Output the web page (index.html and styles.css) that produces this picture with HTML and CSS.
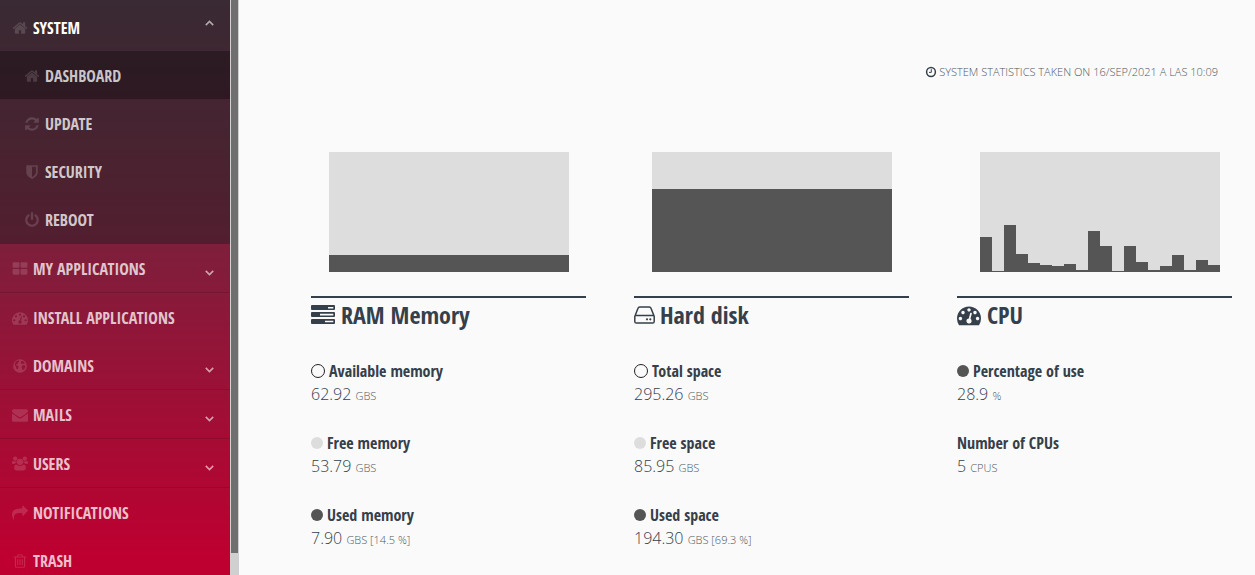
FILE: index.html
```html
<!DOCTYPE html>
<html lang="en">
<head>
  <meta charset="UTF-8" />
  <meta name="viewport" content="width=device-width, initial-scale=1.0"/>
  <title>Dashboard</title>
  <link rel="stylesheet" href="styles.css">
</head>
<body>

<svg class="sprite" aria-hidden="true">
  <symbol id="home" viewBox="0 0 1792 1792"><path d="M1472 992v480q0 26-19 45t-45 19h-384v-384h-256v384h-384q-26 0-45-19t-19-45v-480q0-1 .5-3t.5-3l575-474 575 474q1 2 1 6zm223-69l-62 74q-8 9-21 11h-3q-13 0-21-7l-692-577-692 577q-12 8-24 7-13-2-21-11l-62-74q-8-10-7-23.5t11-21.5l719-599q32-26 76-26t76 26l244 204v-195q0-14 9-23t23-9h192q14 0 23 9t9 23v408l219 182q10 8 11 21.5t-7 23.5z"/></symbol>
  <symbol id="refresh" viewBox="0 0 1792 1792"><path d="M1639 1056q0 5-1 7-64 268-268 434.5t-478 166.5q-146 0-282.5-55t-243.5-157l-129 129q-19 19-45 19t-45-19-19-45v-448q0-26 19-45t45-19h448q26 0 45 19t19 45-19 45l-137 137q71 66 161 102t187 36q134 0 250-65t186-179q11-17 53-117 8-23 30-23h192q13 0 22.5 9.5t9.5 22.5zm25-800v448q0 26-19 45t-45 19h-448q-26 0-45-19t-19-45 19-45l138-138q-148-137-349-137-134 0-250 65t-186 179q-11 17-53 117-8 23-30 23h-199q-13 0-22.5-9.5t-9.5-22.5v-7q65-268 270-434.5t480-166.5q146 0 284 55.5t245 156.5l130-129q19-19 45-19t45 19 19 45z"/></symbol>
  <symbol id="shield" viewBox="0 0 1792 1792"><path d="M1344 960v-640h-448v1137q119-63 213-137 235-184 235-360zm192-768v768q0 86-33.5 170.5t-83 150-118 127.5-126.5 103-121 77.5-89.5 49.5-42.5 20q-12 6-26 6t-26-6q-16-7-42.5-20t-89.5-49.5-121-77.5-126.5-103-118-127.5-83-150-33.5-170.5v-768q0-26 19-45t45-19h1152q26 0 45 19t19 45z"/></symbol>
  <symbol id="power" viewBox="0 0 1792 1792"><path d="M1664 896q0 156-61 298t-164 245-245 164-298 61-298-61-245-164-164-245-61-298q0-182 80.5-343t226.5-270q43-32 95.5-25t83.5 50q32 42 24.5 94.5t-49.5 84.5q-98 74-151.5 181t-53.5 228q0 104 40.5 198.5t109.5 163.5 163.5 109.5 198.5 40.5 198.5-40.5 163.5-109.5 109.5-163.5 40.5-198.5q0-121-53.5-228t-151.5-181q-42-32-49.5-84.5t24.5-94.5q31-43 84-50t95 25q146 109 226.5 270t80.5 343zm-640-768v640q0 52-38 90t-90 38-90-38-38-90v-640q0-52 38-90t90-38 90 38 38 90z"/></symbol>
  <symbol id="apps" viewBox="0 0 1792 1792"><rect x="64" y="128" width="768" height="640" rx="128"/><rect x="960" y="128" width="768" height="640" rx="128"/><rect x="64" y="896" width="768" height="640" rx="128"/><rect x="960" y="896" width="768" height="640" rx="128"/></symbol>
  <symbol id="gauge" viewBox="0 0 1792 1792"><path d="M384 1152q0-53-37.5-90.5t-90.5-37.5-90.5 37.5-37.5 90.5 37.5 90.5 90.5 37.5 90.5-37.5 37.5-90.5zm192-448q0-53-37.5-90.5t-90.5-37.5-90.5 37.5-37.5 90.5 37.5 90.5 90.5 37.5 90.5-37.5 37.5-90.5zm428 481l101-382q6-26-7.5-48.5t-38.5-29.5-48 6.5-30 39.5l-101 382q-60 5-107 43.5t-63 98.5q-20 77 20 146t117 89 146-20 89-117q16-60-6-117t-72-91zm660-33q0-53-37.5-90.5t-90.5-37.5-90.5 37.5-37.5 90.5 37.5 90.5 90.5 37.5 90.5-37.5 37.5-90.5zm-640-640q0-53-37.5-90.5t-90.5-37.5-90.5 37.5-37.5 90.5 37.5 90.5 90.5 37.5 90.5-37.5 37.5-90.5zm448 192q0-53-37.5-90.5t-90.5-37.5-90.5 37.5-37.5 90.5 37.5 90.5 90.5 37.5 90.5-37.5 37.5-90.5zm320 448q0 261-141 483-19 29-54 29h-1402q-35 0-54-29-141-221-141-483 0-182 71-348t191-286 286-191 348-71 348 71 286 191 191 286 71 348z"/></symbol>
  <symbol id="globe" viewBox="0 0 1792 1792"><path fill-rule="evenodd" d="M896 128a768 768 0 1 0 0 1536a768 768 0 1 0 0-1536zM1060 330l160 0 150 130 60 130-90 60-130-40-110 70-130-60 40-130zM1150 830l180-50 170 90-30 220-130 190-110 100-70-160-90-150zM440 400l190-110 190 0-20 130-130 70-50 90 60 80-110 60-90-40-50 70 90 90 120 30 110 120-60 130-80 170-110-90-60-220-110-170-10-190z"/></symbol>
  <symbol id="mail" viewBox="0 0 1792 1792"><path d="M1792 710v794q0 66-47 113t-113 47h-1472q-66 0-113-47t-47-113v-794q44 49 101 87 362 246 497 345 57 42 92.5 65.5t94.5 48 110 24.5h2q51 0 110-24.5t94.5-48 92.5-65.5q170-123 498-345 57-39 100-87zm0-294q0 79-49 151t-122 123q-376 261-468 325-10 7-42.5 31t-54 38.5-52 32.5-57.5 27-50 9h-2q-23 0-50-9t-57.5-27-52-32.5-54-38.5-42.5-31q-91-64-262-182.5t-205-142.5q-62-42-117-115.5t-55-136.5q0-78 41.5-130t118.5-52h1472q65 0 112.5 47t47.5 113z"/></symbol>
  <symbol id="users" viewBox="0 0 1920 1792"><circle cx="384" cy="256" r="256"/><circle cx="1536" cy="256" r="256"/><circle cx="960" cy="640" r="384"/><path d="M530 768q-170 8-270 128H134q-134 0-134-130 0-254 120-254 140 90 264 90 70 0 145-25-8 60-8 63 0 66 9 128zM1390 768q170 8 270 128h126q134 0 134-130 0-254-120-254-140 90-264 90-70 0-145-25 8 60 8 63 0 66-9 128zM1664 1405q0 259-260 259H516q-260 0-260-259 0-445 270-445 20 0 80 48 170 110 354 110t354-110q60-48 80-48 270 0 270 445z"/></symbol>
  <symbol id="share" viewBox="0 0 1792 1792"><path d="M1792 640q0 26-19 45l-512 512q-19 19-45 19t-45-19-19-45v-256h-224q-98 0-175.5 6t-154 21.5-133 42.5-105.5 69.5-80 101-48.5 138.5-17.5 181q0 55 5 123 0 6 2.5 23.5t2.5 26.5q0 15-8.5 25t-23.5 10q-16 0-28-17-7-9-13-22t-13.5-30-10.5-24q-127-285-127-451 0-199 53-333 162-403 875-403h224v-256q0-26 19-45t45-19 45 19l512 512q19 19 19 45z"/></symbol>
  <symbol id="trash" viewBox="0 0 1792 1792"><path d="M704 736v576q0 14-9 23t-23 9h-64q-14 0-23-9t-9-23v-576q0-14 9-23t23-9h64q14 0 23 9t9 23zm256 0v576q0 14-9 23t-23 9h-64q-14 0-23-9t-9-23v-576q0-14 9-23t23-9h64q14 0 23 9t9 23zm256 0v576q0 14-9 23t-23 9h-64q-14 0-23-9t-9-23v-576q0-14 9-23t23-9h64q14 0 23 9t9 23zm128 724v-948h-896v948q0 22 7 40.5t14.5 27 10.5 8.5h832q3 0 10.5-8.5t14.5-27 7-40.5zm-672-1076h448l-48-117q-7-9-17-11h-317q-10 2-17 11zm928 32v64q0 14-9 23t-23 9h-96v948q0 83-47 143.5t-113 60.5h-832q-66 0-113-58.5t-47-141.5v-952h-96q-14 0-23-9t-9-23v-64q0-14 9-23t23-9h309l70-167q15-37 54-63t79-26h320q40 0 79 26t54 63l70 167h309q14 0 23 9t9 23z"/></symbol>
  <symbol id="clock" viewBox="0 0 12 12"><circle cx="6" cy="6" r="4.4" fill="none" stroke="currentColor" stroke-width="1.5"/><path d="M6.3 3.2v3.2H4" fill="none" stroke="currentColor" stroke-width="1"/></symbol>
  <symbol id="tasks" viewBox="0 0 24 20"><path fill-rule="evenodd" d="M1 0h22q1 0 1 1v3q0 1-1 1H1q-1 0-1-1V1q0-1 1-1zM17 2v1.4h5.3V2zM1 7h22q1 0 1 1v3q0 1-1 1H1q-1 0-1-1V8q0-1 1-1zM9 8.8v1.6h13.3V8.8zM1 14h22q1 0 1 1v3q0 1-1 1H1q-1 0-1-1v-3q0-1 1-1zM14 15.7v1.6h8.3v-1.6z"/></symbol>
  <symbol id="disk" viewBox="0 0 21 18"><path d="M.8 10.5L4 2.200Q4.400.9 5.800.9h9.400q1.400 0 1.800 1.300l3.200 8.300v5q0 1.600-1.600 1.600H2.400q-1.600 0-1.600-1.600zM1.300 9.400h18.400" fill="none" stroke="currentColor" stroke-width="1.5"/><circle cx="13" cy="13.300" r="1.1"/><circle cx="16.300" cy="13.300" r="1.1"/></symbol>
  <symbol id="arrow" viewBox="0 0 9 6"><path d="M.8.900l3.700 3.700L8.200.900" fill="none" stroke="currentColor" stroke-width="1.6"/></symbol>
</svg>

<div class="sidebar">
  <nav class="menu">
    <div class="group open">
      <a class="item active" href="#"><svg class="icon"><use href="#home"/></svg>System<svg class="arrow up"><use href="#arrow"/></svg></a>
      <a class="item sub current" href="#"><svg class="icon"><use href="#home"/></svg>Dashboard</a>
      <a class="item sub" href="#"><svg class="icon"><use href="#refresh"/></svg>Update</a>
      <a class="item sub" href="#"><svg class="icon"><use href="#shield"/></svg>Security</a>
      <a class="item sub" href="#"><svg class="icon"><use href="#power"/></svg>Reboot</a>
    </div>
    <div class="group"><a class="item" href="#"><svg class="icon"><use href="#apps"/></svg>My applications<svg class="arrow"><use href="#arrow"/></svg></a></div>
    <a class="item" href="#"><svg class="icon"><use href="#gauge"/></svg>Install applications</a>
    <div class="group"><a class="item" href="#"><svg class="icon"><use href="#globe"/></svg>Domains<svg class="arrow"><use href="#arrow"/></svg></a></div>
    <div class="group"><a class="item" href="#"><svg class="icon"><use href="#mail"/></svg>Mails<svg class="arrow"><use href="#arrow"/></svg></a></div>
    <div class="group"><a class="item" href="#"><svg class="icon"><use href="#users"/></svg>Users<svg class="arrow"><use href="#arrow"/></svg></a></div>
    <a class="item" href="#"><svg class="icon"><use href="#share"/></svg>Notifications</a>
    <a class="item" href="#"><svg class="icon"><use href="#trash"/></svg>Trash</a>
  </nav>
  <div class="scrollbar"><div class="thumb"></div></div>
</div>

<main class="main">
  <p class="taken"><svg class="clock"><use href="#clock"/></svg>System statistics taken on 16/Sep/2021 a las 10:09</p>

  <div class="stats">
    <section class="stat">
      <div class="chart level"><div class="used" style="height: 14.5%"></div></div>
      <h2><svg class="tasks"><use href="#tasks"/></svg>RAM Memory</h2>
      <dl>
        <dt><span class="ring"></span>Available memory</dt>
        <dd>62.92 <small>GBs</small></dd>
        <dt><span class="dot free"></span>Free memory</dt>
        <dd>53.79 <small>GBs</small></dd>
        <dt><span class="dot"></span>Used memory</dt>
        <dd>7.90 <small>GBs [14.5 %]</small></dd>
      </dl>
    </section>

    <section class="stat">
      <div class="chart level"><div class="used" style="height: 69.3%"></div></div>
      <h2><svg class="disk"><use href="#disk"/></svg>Hard disk</h2>
      <dl>
        <dt><span class="ring"></span>Total space</dt>
        <dd>295.26 <small>GBs</small></dd>
        <dt><span class="dot free"></span>Free space</dt>
        <dd>85.95 <small>GBs</small></dd>
        <dt><span class="dot"></span>Used space</dt>
        <dd>194.30 <small>GBs [69.3 %]</small></dd>
      </dl>
    </section>

    <section class="stat">
      <div class="chart bars" id="cpu"></div>
      <h2><svg class="cpu"><use href="#gauge"/></svg>CPU</h2>
      <dl>
        <dt><span class="dot"></span>Percentage of use</dt>
        <dd>28.9 <small>%</small></dd>
        <dt>Number of CPUs</dt>
        <dd>5 <small>CPUs</small></dd>
      </dl>
    </section>
  </div>
</main>

<script src="script.js"></script>
</body>
</html>
```

FILE: styles.css
```css
* { box-sizing: border-box; }
body {
  margin: 0;
  font-family: 'Open Sans', sans-serif;
  background: #fafafa;
  color: #35404b;
  display: flex;
  height: 100vh;
  overflow: hidden;
}
svg { fill: currentColor; flex-shrink: 0; }
.sprite { display: none; }

/* sidebar */
.sidebar {
  display: flex;
  width: 239px;
  flex-shrink: 0;
}
.menu {
  flex: 1;
  overflow: hidden;
  background: linear-gradient(#4a3644, #7d1f3c 42%, #be0030 97%);
}
.group { border-bottom: 1px solid rgba(0, 0, 0, 0.12); }
.group.open {
  padding: 3px 0 1px;
  border: none;
  background: rgba(39, 29, 34, 0.5);
}
.item {
  display: flex;
  align-items: center;
  height: 48px;
  padding: 2px 16px 0 12px;
  font-family: 'Open Sans Condensed', 'Open Sans', sans-serif;
  font-size: 16px;
  font-weight: 700;
  text-transform: uppercase;
  text-decoration: none;
  color: rgba(255, 255, 255, 0.75);
}
.item.active { color: #fff; }
.item.sub { padding-left: 24px; }
.item.current { background: rgba(0, 0, 0, 0.3); }
.icon {
  width: 16px;
  height: 16px;
  margin-right: 5px;
  color: rgba(255, 255, 255, 0.15);
}
.arrow {
  width: 9px;
  height: 6px;
  margin: 8px 0 0 auto;
  color: rgba(255, 255, 255, 0.6);
}
.arrow.up {
  margin: 0 0 10px auto;
  transform: rotate(180deg);
}
.scrollbar {
  width: 9px;
  padding: 0 1px;
  background: #d0d0d0;
}
.thumb {
  height: 96.2%;
  background: #6f6f6f;
}

/* statistics */
.main {
  flex: 1;
  padding: 62px 23px 0 72px;
}
.taken {
  margin: 0 14px 70px 0;
  text-align: right;
  text-transform: uppercase;
  font-size: 11px;
  font-weight: 300;
  line-height: 20px;
  color: #4f5963;
}
.clock {
  width: 12px;
  height: 12px;
  margin-right: 2px;
  vertical-align: -2px;
  color: #35404b;
}
.stats {
  display: grid;
  grid-template-columns: repeat(3, 1fr);
  column-gap: 48px;
}
.chart {
  display: flex;
  align-items: flex-end;
  width: 240px;
  height: 120px;
  background: #ddd;
}
.level { margin-left: 18px; }
.bars { margin-left: 23px; }
.used {
  flex: 1;
  background: #555;
}
h2 {
  display: flex;
  align-items: center;
  margin: 24px 0 27px;
  border-top: 2px solid #35404b;
  font-family: 'Open Sans Condensed', 'Open Sans', sans-serif;
  font-size: 24px;
  font-weight: 700;
  line-height: 34px;
}
.tasks { width: 24px; height: 20px; margin-right: 6px; }
.disk { width: 21px; height: 18px; margin-right: 5px; }
.cpu { width: 24px; height: 24px; margin-right: 6px; }
dl { margin: 0; }
dt {
  display: flex;
  align-items: center;
  font-family: 'Open Sans Condensed', 'Open Sans', sans-serif;
  font-size: 16px;
  font-weight: 700;
  line-height: 24px;
}
dd {
  margin: 0 0 24px;
  font-size: 16px;
  font-weight: 300;
  line-height: 22px;
}
small {
  font-size: 11px;
  text-transform: uppercase;
  color: #4f5963;
}
.ring {
  width: 14px;
  height: 14px;
  margin-right: 4px;
  border: 1px solid #222;
  border-radius: 50%;
}
.dot {
  width: 12px;
  height: 12px;
  margin-right: 4px;
  border-radius: 50%;
  background: #555;
}
.dot.free { background: #ddd; }
```

FILE: script.js
```js
const samples = [29, 1, 39, 15, 7.5, 6, 5, 6.7, 1.7, 34, 21.5, 1, 21.5, 8.3, 1.7, 5, 14, 1.7, 10, 6];
const cpu = document.getElementById("cpu");

samples.forEach(value => {
  const bar = document.createElement("div");
  bar.className = "used";
  bar.style.height = `${value}%`;
  cpu.appendChild(bar);
});
```
